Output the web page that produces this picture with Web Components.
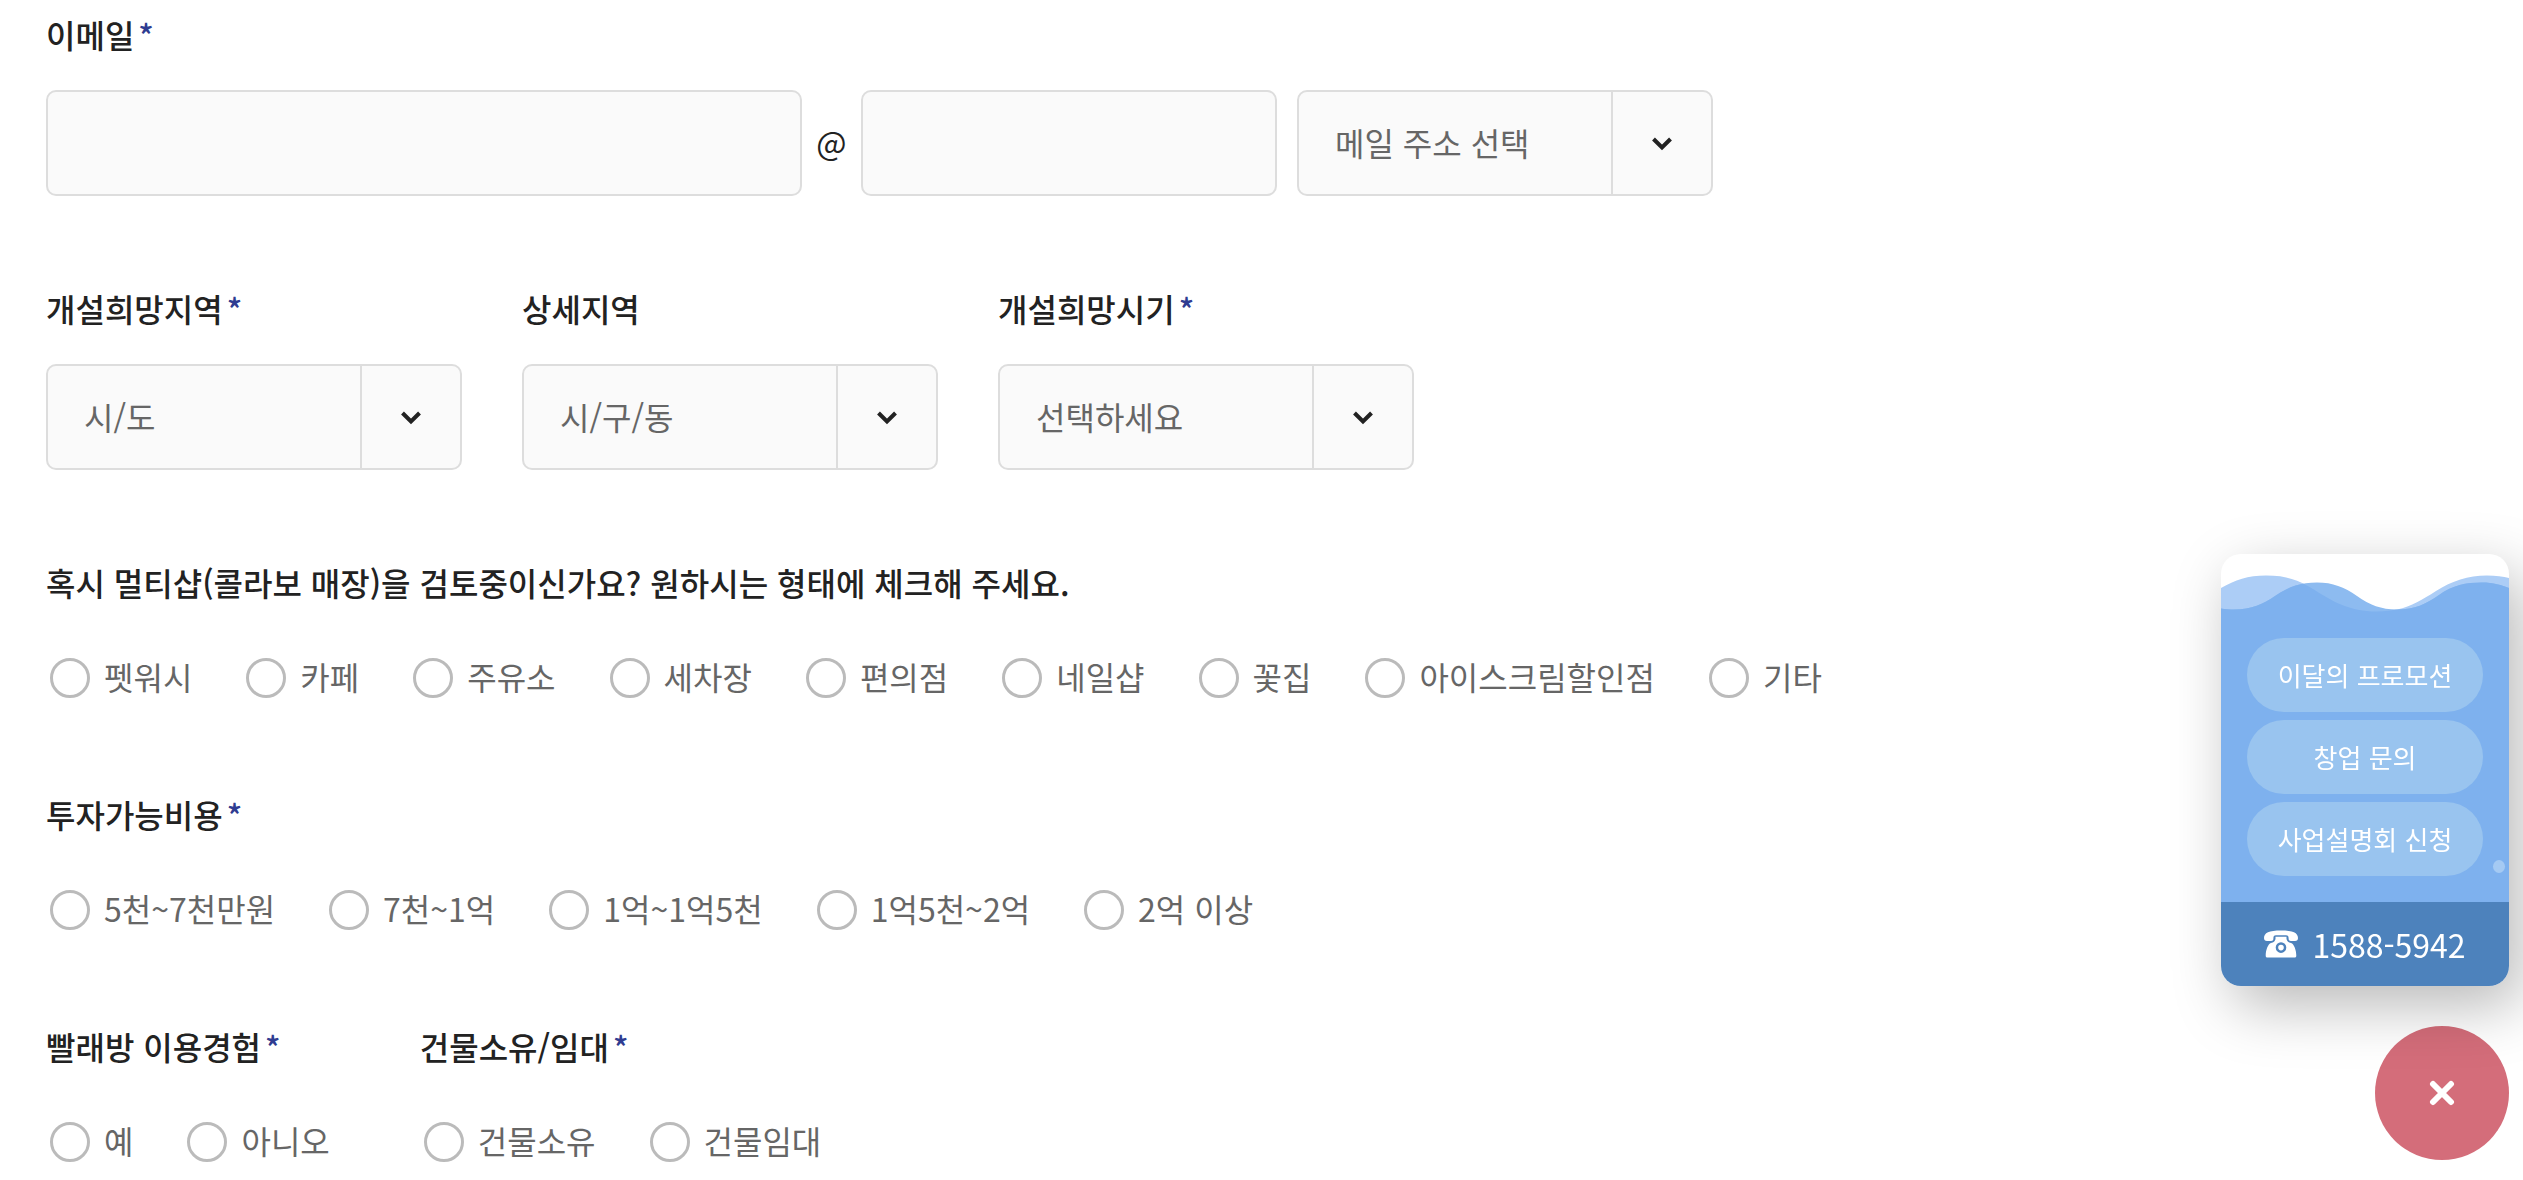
<!DOCTYPE html>
<html lang="ko">
<head>
<meta charset="utf-8">
<title>창업 문의</title>
<meta name="viewport" content="width=device-width, initial-scale=1">
<style>
body { margin: 0; background: #fff; color: #222; font: 400 32px/48px "Noto Sans CJK KR", sans-serif; }
</style>
</head>
<body>
<inquiry-form></inquiry-form>
<quick-menu></quick-menu>
<script>
const labelCss = `
  .label { display: block; margin: 0 0 32px; padding: 0; font-weight: 500; color: #222; white-space: nowrap; }
  .label i { margin-left: 4px; font-style: normal; color: #2f3c91; }`;
const boxCss = `
  input, select { box-sizing: border-box; width: 100%; height: 106px; margin: 0; padding: 0 36px 2px; border: 2px solid #ddd;
    border-radius: 10px; background: #fafafa; color: #666; font: inherit; outline: 0; appearance: none; }`;
const star = el => el.hasAttribute('required') ? '<i>*</i>' : '';

class DropDown extends HTMLElement {
  connectedCallback() {
    const root = this.attachShadow({ mode: 'open' });
    const label = this.getAttribute('label');
    root.innerHTML = `<style>${labelCss}${boxCss}
      :host { display: block; flex: 0 1 416px; min-width: 0; }
      .box { display: grid; }
      .box > * { grid-area: 1 / 1; }
      select { padding-right: 110px; }
      .arrow { justify-self: end; display: grid; place-items: center; width: 100px; margin: 2px; border-left: 2px solid #ddd; pointer-events: none; box-sizing: border-box; }
      svg { width: 20px; height: 16px; }
      </style>
      ${label ? `<label class="label" for="s">${label}${star(this)}</label>` : ''}
      <div class="box"><select id="s" aria-label="${label || this.getAttribute('text')}"><option>${this.getAttribute('text')}</option></select>
      <span class="arrow"><svg viewBox="0 0 20 16" fill="none" stroke="#222" stroke-width="4"><path d="M1.500 4 10 12.500l8.500-8.500"/></svg></span></div>`;
  }
}
customElements.define('drop-down', DropDown);

class EmailField extends HTMLElement {
  connectedCallback() {
    this.attachShadow({ mode: 'open' }).innerHTML = `<style>${labelCss}${boxCss}
      :host { display: block; }
      .row { display: flex; align-items: center; }
      #id { flex: 0 1 756px; min-width: 0; }
      .at { flex: 0 0 59px; padding-bottom: 4px; text-align: center; }
      #domain { flex: 0 1 416px; min-width: 0; margin-right: 20px; }
      </style>
      <label class="label" for="id">이메일${star(this)}</label>
      <div class="row"><input id="id" type="text"><span class="at">@</span>
      <input id="domain" type="text" aria-label="메일 도메인"><drop-down text="메일 주소 선택"></drop-down></div>`;
  }
}
customElements.define('email-field', EmailField);

class RadioOption extends HTMLElement {
  connectedCallback() {
    this.attachShadow({ mode: 'open' }).innerHTML = `<style>
      :host { display: block; }
      label { display: flex; align-items: center; gap: 14px; color: #666; white-space: nowrap; }
      span { padding-bottom: 4px; line-height: 44px; }
      input { flex: none; box-sizing: border-box; width: 40px; height: 40px; margin: 0 0 0 4px; border: 3px solid #bbb; border-radius: 50%; background: #fff; appearance: none; }
      input:checked { border-width: 12px; border-color: #2f3c91; }
      </style><label><input type="radio"><span><slot></slot></span></label>`;
  }
}
customElements.define('radio-option', RadioOption);

class RadioGroup extends HTMLElement {
  connectedCallback() {
    this.attachShadow({ mode: 'open' }).innerHTML = `<style>${labelCss}
      :host { display: block; }
      fieldset { margin: 0; padding: 0; border: 0; min-width: 0; }
      .options { display: flex; flex-wrap: wrap; gap: 16px 50px; padding-top: 16px; }
      </style><fieldset><legend class="label">${this.getAttribute('label')}${star(this)}</legend>
      <div class="options"><slot></slot></div></fieldset>`;
  }
}
customElements.define('radio-group', RadioGroup);

const options = list => list.map(t => `<radio-option>${t}</radio-option>`).join('');

class InquiryForm extends HTMLElement {
  connectedCallback() {
    this.attachShadow({ mode: 'open' }).innerHTML = `<style>
      :host { display: block; padding: 10px 46px 0; }
      form { display: flex; flex-direction: column; gap: 88px; }
      .row { display: flex; gap: 60px; }
      .pair { gap: 90px; }
      </style><form>
      <email-field required></email-field>
      <div class="row">
        <drop-down label="개설희망지역" text="시/도" required></drop-down>
        <drop-down label="상세지역" text="시/구/동"></drop-down>
        <drop-down label="개설희망시기" text="선택하세요" required></drop-down>
      </div>
      <radio-group label="혹시 멀티샵(콜라보 매장)을 검토중이신가요? 원하시는 형태에 체크해 주세요.">${options(['펫워시', '카페', '주유소', '세차장', '편의점', '네일샵', '꽃집', '아이스크림할인점', '기타'])}</radio-group>
      <radio-group label="투자가능비용" required>${options(['5천~7천만원', '7천~1억', '1억~1억5천', '1억5천~2억', '2억 이상'])}</radio-group>
      <div class="row pair">
        <radio-group label="빨래방 이용경험" required>${options(['예', '아니오'])}</radio-group>
        <radio-group label="건물소유/임대" required>${options(['건물소유', '건물임대'])}</radio-group>
      </div></form>`;
  }
}
customElements.define('inquiry-form', InquiryForm);

const backWave = 'M0 34C14 26 27 21.500 45 21.500C66 21.500 77 26 92 35C111 47 128 57.500 156 57.500C183 57.500 196 49 215 37C231 27 247 21.500 266 21.500C275 21.500 282 22.500 288 24V60H0Z';
const frontWave = 'M0 54.500C4 55.300 8 55.500 13 55.500C31 55.500 42 50 54 42C69 32 80 28.500 96 28.500C112 28.500 123 33 136 42C149 51 160 55.500 176 55.500C194 55.500 205 50 218 41C232 31 245 28.500 261 28.500C272 28.500 281 31 288 34V60H0Z';

class QuickMenu extends HTMLElement {
  connectedCallback() {
    this.attachShadow({ mode: 'open' }).innerHTML = `<style>
      :host { position: fixed; right: 14px; bottom: 20px; display: flex; flex-direction: column; align-items: flex-end; gap: 40px; }
      .card { position: relative; z-index: 1; width: 288px; overflow: hidden; border-radius: 20px; background: #fff; box-shadow: 12px 20px 60px rgba(0,0,0,.28); }
      .wave { display: block; width: 100%; height: 60px; }
      nav { display: flex; flex-direction: column; gap: 8px; padding: 24px 26px 26px; background: #7eb1ee; }
      nav a { border-radius: 37px; background: #99c4ef; color: #fff; font-size: 26px; line-height: 74px; text-align: center; text-decoration: none; white-space: nowrap; }
      .tel { display: flex; align-items: center; justify-content: center; gap: 14px; height: 84px; background: #4d82bc; color: #fff; text-decoration: none; }
      .tel svg { width: 34px; height: 28px; }
      .dot { position: absolute; right: 4px; bottom: 113px; width: 12px; height: 13px; border-radius: 50%; background: #a5caf3; }
      button { display: grid; place-items: center; width: 134px; height: 134px; padding: 0; border: 0; border-radius: 50%; background: #d46d7a; }
      button svg { width: 26px; height: 26px; }
      </style>
      <div class="card">
        <svg class="wave" viewBox="0 0 288 60" preserveAspectRatio="none">
          <clipPath id="front"><path d="${frontWave}"/></clipPath>
          <path fill="#accdf6" d="${backWave}"/>
          <path fill="#8dbbf0" d="${frontWave}"/>
          <path fill="#7eb1ee" clip-path="url(#front)" d="${backWave}"/>
        </svg>
        <nav><a href="#">이달의 프로모션</a><a href="#">창업 문의</a><a href="#">사업설명회 신청</a></nav>
        <a class="tel" href="tel:1588-5942"><svg viewBox="0 0 34 28" fill="#fff"><path d="M0 8C0 2.800 5 .500 17 .500S34 2.800 34 8C34 10 33 11 31 11H27C25 11 24.600 10 24.600 8.500C24.600 6 24 5.300 22 5.300H12C10 5.300 9.400 6 9.400 8.500C9.400 10 9 11 7 11H3C1 11 0 10 0 8Z"/><path fill-rule="evenodd" d="M11.500 6.800H22.500V9C23 11.500 24.500 12.500 27 13C30 14 32.300 20 32.300 25.500C32.300 27 31.800 27.500 30.500 27.500H3.500C2.200 27.500 1.700 27 1.700 25.500C1.700 20 4 14 7 13C9.500 12.500 11 11.500 11.500 9ZM17 12.300A5.300 5.300 0 1 0 17 22.900A5.300 5.300 0 1 0 17 12.300ZM17 14.800A2.800 2.800 0 1 1 17 20.400A2.800 2.800 0 1 1 17 14.800Z"/></svg>1588-5942</a>
        <span class="dot"></span>
      </div>
      <button type="button" aria-label="닫기"><svg viewBox="0 0 26 26" stroke="#fff" stroke-width="6" stroke-linecap="round"><path d="M4 4l18 18M22 4 4 22"/></svg></button>`;
  }
}
customElements.define('quick-menu', QuickMenu);
</script>
</body>
</html>
